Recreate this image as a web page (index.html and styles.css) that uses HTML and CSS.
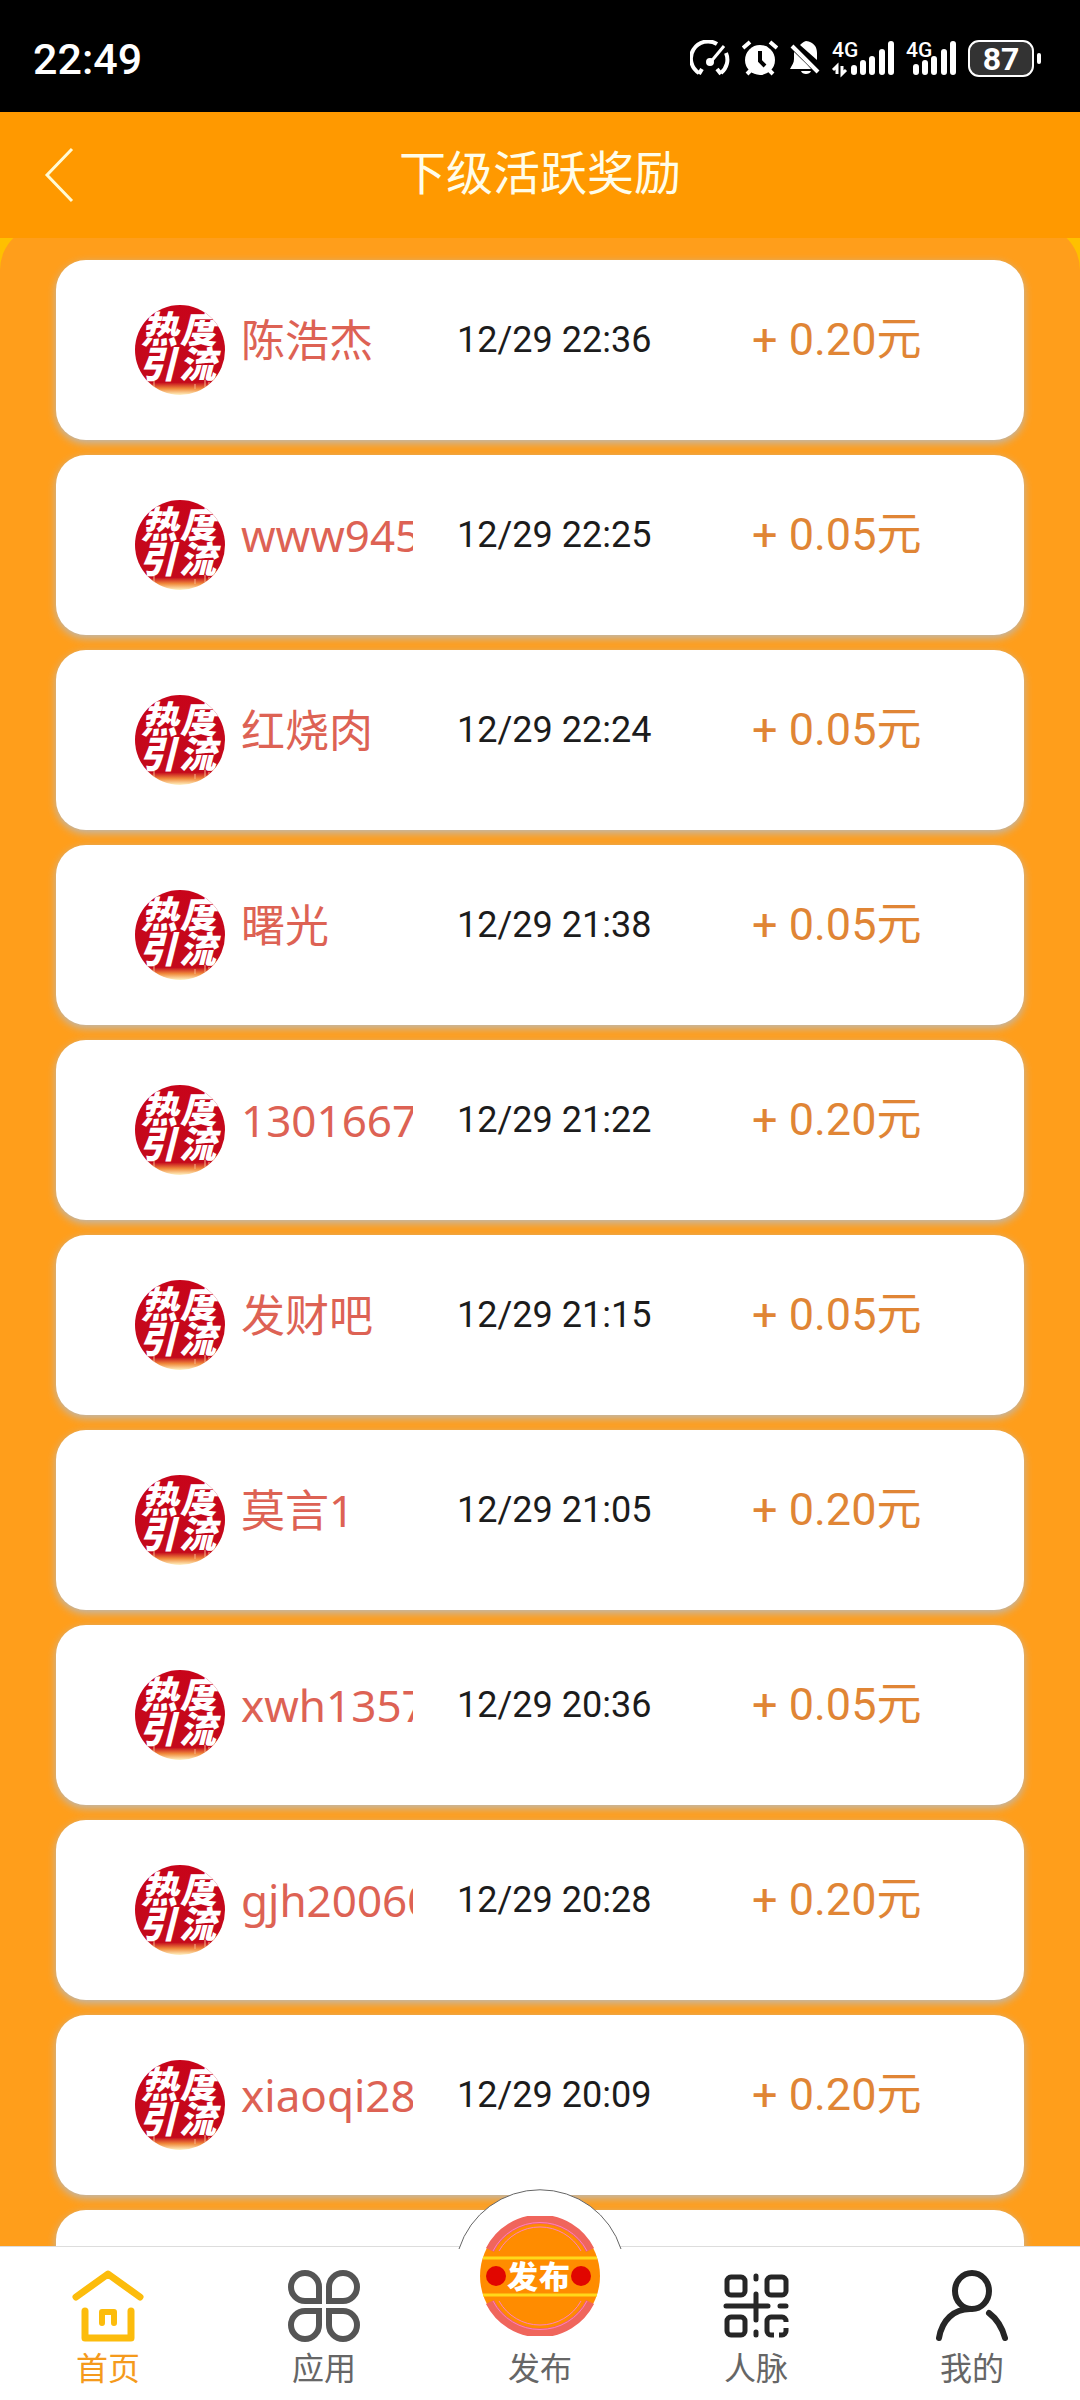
FILE: index.html
```html
<!DOCTYPE html>
<html lang="zh-CN">
<head>
 <meta charset="UTF-8">
 <meta name="viewport" content="width=device-width, initial-scale=1.0">
 <title>下级活跃奖励</title>
 <link rel="stylesheet" href="styles.css">
</head>
<body>
 <!-- shared shapes -->
 <svg class="defs" aria-hidden="true">
  <defs>
   <linearGradient id="fire" x1="0" y1="0" x2="0" y2="1">
    <stop offset="0" stop-color="#c8041a"/>
    <stop offset="0.86" stop-color="#c40a1c"/>
    <stop offset="0.93" stop-color="#f08a3c"/>
    <stop offset="1" stop-color="#fff3c4"/>
   </linearGradient>
   <clipPath id="round"><circle cx="45" cy="45" r="45"/></clipPath>
   <symbol id="avatar" viewBox="0 0 90 90">
    <g clip-path="url(#round)">
     <rect width="90" height="90" fill="url(#fire)"/>
     <path d="M14 84V78M19 86V76M60 84V79M70 82V75M74 82V77" stroke="#f6b489" stroke-width="1"/>
     <g class="avatar-text">
      <text x="6 45" y="38">热度</text>
      <text x="4 44" y="73">引流</text>
     </g>
    </g>
   </symbol>
  </defs>
 </svg>

 <div class="status">
  <span class="clock">22:49</span>
  <div class="status-icons">
   <svg width="40" height="36" viewBox="0 0 40 36" fill="none" stroke="#fff" stroke-width="4">
    <path d="M9 33A17 17 0 0 1 27 4M36 13A17 17 0 0 1 31 33M9 34l3-5M31 34l-4-5"/>
    <path d="M19 24L34 6" stroke-width="3"/>
    <circle cx="20" cy="22" r="3" fill="#fff" stroke-width="2"/>
   </svg>
   <svg width="36" height="36" viewBox="0 0 36 36" fill="none" stroke="#fff" stroke-width="4">
    <circle cx="18" cy="20" r="15" fill="#fff" stroke="none"/>
    <path d="M1 8l7-6M35 8l-7-6M5 34l5-5M31 34l-5-5"/>
    <path d="M18 11v10l5 5" stroke="#000" stroke-width="4"/>
   </svg>
   <svg width="30" height="36" viewBox="0 0 30 36">
    <path d="M16 1c8 1 11 6 11 12v7L10 5c2-2 3-3 6-4zM4 12c2 2 13 12 17 17H0c2-4 4-6 4-10zM11 31h10c-1 4-9 4-10 0z" fill="#fff"/>
    <path d="M2 6l26 26" stroke="#fff" stroke-width="4"/>
   </svg>
   <svg class="signal" width="62" height="36" viewBox="0 0 62 36" fill="none" stroke="#fff">
    <text x="0" y="17">4G</text>
    <path d="M5 34V26l-4 4M10 26v8l4-4" stroke-width="3"/>
    <path d="M22 28v4M31 23v9M40 19v13M50 12v20M59 4v28" stroke-width="6" stroke-linecap="round"/>
   </svg>
   <svg class="signal" width="50" height="36" viewBox="0 0 50 36" fill="none" stroke="#fff">
    <text x="0" y="17">4G</text>
    <path d="M10 27v5M19 23v9M28 19v13M38 12v20M47 4v28" stroke-width="6" stroke-linecap="round"/>
   </svg>
   <span class="battery">87</span>
  </div>
 </div>

 <header class="titlebar">
  <button class="back" type="button" aria-label="返回">
   <svg width="30" height="56" viewBox="0 0 30 56" fill="none" stroke="#fffbd5" stroke-width="3"><path d="M28 2L3 28L28 54"/></svg>
  </button>
  <h1>下级活跃奖励</h1>
 </header>

 <main class="page">
  <ul class="list">
   <li class="card"><svg class="avatar"><use href="#avatar"/></svg><span class="name">陈浩杰</span><time>12/29 22:36</time><span class="amount">+ 0.20元</span></li>
   <li class="card"><svg class="avatar"><use href="#avatar"/></svg><span class="name">www945</span><time>12/29 22:25</time><span class="amount">+ 0.05元</span></li>
   <li class="card"><svg class="avatar"><use href="#avatar"/></svg><span class="name">红烧肉</span><time>12/29 22:24</time><span class="amount">+ 0.05元</span></li>
   <li class="card"><svg class="avatar"><use href="#avatar"/></svg><span class="name">曙光</span><time>12/29 21:38</time><span class="amount">+ 0.05元</span></li>
   <li class="card"><svg class="avatar"><use href="#avatar"/></svg><span class="name">1301667</span><time>12/29 21:22</time><span class="amount">+ 0.20元</span></li>
   <li class="card"><svg class="avatar"><use href="#avatar"/></svg><span class="name">发财吧</span><time>12/29 21:15</time><span class="amount">+ 0.05元</span></li>
   <li class="card"><svg class="avatar"><use href="#avatar"/></svg><span class="name">莫言1</span><time>12/29 21:05</time><span class="amount">+ 0.20元</span></li>
   <li class="card"><svg class="avatar"><use href="#avatar"/></svg><span class="name">xwh1357</span><time>12/29 20:36</time><span class="amount">+ 0.05元</span></li>
   <li class="card"><svg class="avatar"><use href="#avatar"/></svg><span class="name">gjh20060</span><time>12/29 20:28</time><span class="amount">+ 0.20元</span></li>
   <li class="card"><svg class="avatar"><use href="#avatar"/></svg><span class="name">xiaoqi28</span><time>12/29 20:09</time><span class="amount">+ 0.20元</span></li>
   <li class="card"></li>
  </ul>
 </main>

 <nav class="tabbar">
  <a class="tab active" href="#home">
   <svg width="72" height="72" viewBox="0 0 72 72" fill="none" stroke="#fcbc0c" stroke-width="7" stroke-linecap="round" stroke-linejoin="round">
    <path d="M4 27L36 4L68 27M13 41V68H59V41"/>
    <path d="M30 53V42H42V53" stroke-width="6"/>
   </svg>
   <span>首页</span>
  </a>
  <a class="tab" href="#apps">
   <svg width="72" height="72" viewBox="0 0 72 72" fill="none" stroke="#555" stroke-width="6">
    <path d="M31 31H17A14 14 0 1 1 31 17ZM41 31H55A14 14 0 1 0 41 17ZM31 41H17A14 14 0 1 0 31 55ZM41 41H55A14 14 0 1 1 41 55Z"/>
   </svg>
   <span>应用</span>
  </a>
  <a class="tab" href="#publish">
   <svg class="bump" width="172" height="60" viewBox="0 0 172 60">
    <path d="M5 60A85 85 0 0 1 167 60" fill="#fff" stroke="#666" stroke-width="1"/>
   </svg>
   <svg class="badge" width="120" height="120" viewBox="0 0 120 120" fill="none">
    <circle cx="60" cy="60" r="60" fill="#ff8c00"/>
    <path d="M10 34A56 56 0 0 1 110 34M10 86A56 56 0 0 0 110 86" stroke="#f0655c" stroke-width="9"/>
    <path d="M13 35A53 53 0 0 1 107 35M19 35A47 47 0 0 1 101 35M13 85A53 53 0 0 0 107 85M19 85A47 47 0 0 0 101 85" stroke="#ff7fc0" stroke-width="1"/>
    <path d="M3 42H117M3 79H117" stroke="#ffd91a" stroke-width="3"/>
    <circle cx="16" cy="60" r="10" fill="#e10600"/>
    <circle cx="101" cy="60" r="10" fill="#e10600"/>
    <text x="27 59" y="72">发布</text>
   </svg>
   <span>发布</span>
  </a>
  <a class="tab" href="#contacts">
   <svg width="72" height="72" viewBox="0 0 72 72" fill="none" stroke="#262626" stroke-width="5" stroke-linecap="round">
    <rect x="7" y="7" width="18" height="18" rx="4"/>
    <rect x="47" y="7" width="19" height="18" rx="4"/>
    <rect x="7" y="47" width="18" height="18" rx="4"/>
    <path d="M36 6v3M36 24v26M36 62v3M6 36h42M60 36h6"/>
    <path d="M66 52v-1a4 4 0 0 0-4-4H51a4 4 0 0 0-4 4V61a4 4 0 0 0 4 4h3M59 65h3a4 4 0 0 0 4-4v-3" stroke-linecap="butt"/>
   </svg>
   <span>人脉</span>
  </a>
  <a class="tab" href="#mine">
   <svg width="72" height="72" viewBox="0 0 72 72" fill="none" stroke="#262626" stroke-width="6" stroke-linecap="round">
    <ellipse cx="36" cy="21" rx="17" ry="18"/>
    <path d="M3 68C6 50 18 39 34 39M53 43C61 49 66 57 69 68"/>
   </svg>
   <span>我的</span>
  </a>
 </nav>
</body>
</html>
```

FILE: styles.css
```css
* { box-sizing: border-box; }
body {
margin: 0;
height: 100vh;
display: flex;
flex-direction: column;
overflow: hidden;
background: #ffc000;
font-family: Roboto, "Noto Sans CJK SC", sans-serif;
}
.defs {
position: absolute;
width: 0;
height: 0;
}
.status {
flex: none;
height: 112px;
padding: 4px 46px 0 33px;
display: flex;
align-items: center;
justify-content: space-between;
background: #000;
color: #fff;
}
.clock {
padding-top: 2px;
font-size: 43px;
font-weight: 500;
}
.status-icons {
display: flex;
align-items: center;
gap: 12px;
}
.signal { overflow: visible; }
.signal text {
font-size: 21px;
font-weight: 500;
fill: #fff;
stroke: none;
}
.battery {
position: relative;
width: 66px;
height: 37px;
border: 2px solid #fff;
border-radius: 11px;
background: #333;
font-size: 32px;
font-weight: 700;
line-height: 34px;
text-align: center;
}
.battery::after {
content: "";
position: absolute;
right: -9px;
top: 11px;
width: 4px;
height: 11px;
border-radius: 2px;
background: #fff;
}
.titlebar {
flex: none;
z-index: 1;
height: 126px;
padding: 0 44px;
display: grid;
grid-template-columns: 60px 1fr 60px;
align-items: center;
background: #ff9900;
}
.titlebar h1 {
margin: 0;
font-size: 47px;
font-weight: 400;
line-height: 60px;
padding-bottom: 2px;
text-align: center;
color: #fffdea;
}
.back {
display: flex;
padding: 0;
border: 0;
background: none;
}
.page {
flex: 1;
min-height: 0;
margin-top: -13px;
padding: 35px 56px 0;
overflow: hidden;
border-radius: 45px 45px 0 0;
background: #ff9e1b;
}
.list {
margin: 0;
padding: 0;
list-style: none;
}
.card {
height: 180px;
margin-bottom: 15px;
padding: 45px 79px 0;
display: grid;
grid-template-columns: 90px 188px 238px 1fr;
align-items: start;
border-radius: 30px;
background: #fff;
box-shadow: 0 3px 9px #bbb;
line-height: 70px;
white-space: nowrap;
}
.avatar {
width: 90px;
height: 90px;
}
.avatar-text {
font-family: "Noto Sans CJK SC", sans-serif;
font-size: 37px;
font-weight: 900;
font-style: italic;
fill: #fff;
}
.name {
padding-left: 16px;
overflow: hidden;
font-family: "Noto Sans", "Noto Sans CJK SC", sans-serif;
font-size: 44px;
color: #dd6254;
}
.card time {
padding-left: 44px;
font-size: 36px;
color: #1c1c1c;
}
.amount {
padding-left: 101px;
font-size: 45px;
color: #e08535;
}
.tabbar {
flex: none;
position: relative;
z-index: 1;
height: 154px;
display: grid;
grid-template: minmax(0, 1fr) / repeat(5, 1fr);
border-top: 1px solid #ddd;
background: #fff;
}
.tab {
position: relative;
padding-bottom: 11px;
display: flex;
flex-direction: column;
align-items: center;
justify-content: flex-end;
gap: 7px;
font-size: 32px;
line-height: 40px;
text-decoration: none;
color: #666;
}
.tab > * { flex: none; }
.active { color: #f59a1c; }
/* raised above the bar */
.bump {
position: absolute;
left: 50%;
top: -58px;
margin-left: -86px;
}
.badge {
position: relative;
margin-bottom: 6px;
}
.badge text {
font-family: "Noto Sans CJK SC", sans-serif;
font-size: 31px;
font-weight: 900;
fill: #fff;
}
```
